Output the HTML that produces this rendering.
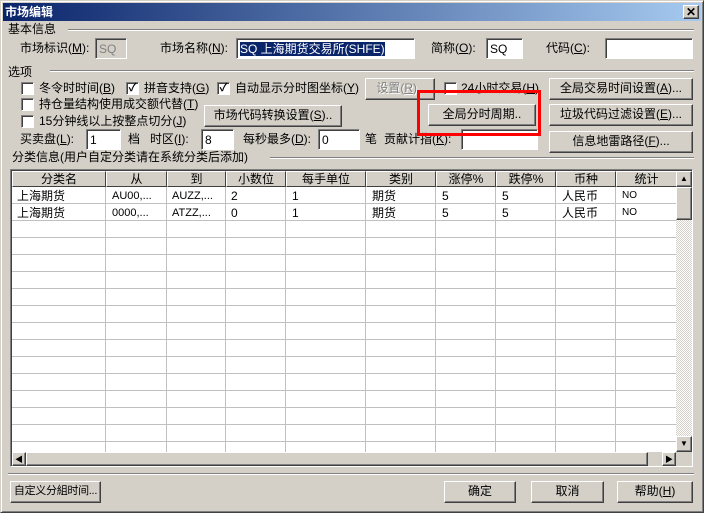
<!DOCTYPE html><html><head><meta charset="utf-8"><style>
*{box-sizing:border-box;margin:0;padding:0}
body{width:704px;height:513px;background:#d4d0c8;font:12px "Liberation Sans","WenQuanYi Zen Hei","Noto Sans CJK SC",sans-serif;color:#000;position:relative;overflow:hidden}
.a{position:absolute;white-space:nowrap;line-height:14px}
.win{position:absolute;left:0;top:0;width:704px;height:513px;border:1px solid;border-color:#d4d0c8 #404040 #404040 #d4d0c8;box-shadow:inset 1px 1px #fff,inset -1px -1px #808080}
.title{position:absolute;left:3px;top:3px;width:698px;height:18px;background:linear-gradient(90deg,#0a246a,#a6caf0);color:#fff;font-weight:bold;font-size:12px;line-height:18px;padding-left:2px}
.edit{position:absolute;background:#fff;border:1px solid;border-color:#808080 #fff #fff #808080;box-shadow:inset 1px 1px #404040;height:21px;padding:3px 3px;line-height:14px;white-space:nowrap;overflow:hidden}
.btn{position:absolute;background:#d4d0c8;border:1px solid;border-color:#fff #404040 #404040 #fff;box-shadow:inset -1px -1px #808080;text-align:center;line-height:19px;height:22px;white-space:nowrap;overflow:hidden}
.cb{position:absolute;width:13px;height:13px;background:#fff;border:1px solid;border-color:#808080 #fff #fff #808080;box-shadow:inset 1px 1px #404040;font-size:11px;line-height:11px;text-align:center;font-weight:bold}
.hr{position:absolute;height:2px;border-top:1px solid #808080;border-bottom:1px solid #fff}
.grid{position:absolute;left:10px;top:169px;width:683px;height:298px;border:1px solid;border-color:#808080 #fff #fff #808080;box-shadow:inset 1px 1px #404040;background:#fff;overflow:hidden}
.rows{position:absolute;left:1px;top:17px;width:665px;height:265px;background:repeating-linear-gradient(180deg,#fff 0 16px,#c0c0c0 16px 17px)}
.vl{position:absolute;top:17px;width:1px;height:265px;background:#c0c0c0}
.hd{position:absolute;top:1px;height:16px;background:#d4d0c8;border:1px solid;border-color:#fff #404040 #404040 #fff;text-align:center;line-height:14px}
.c{position:absolute;line-height:14px;font-size:12px}
.sb{position:absolute;background:#d4d0c8;border:1px solid;border-color:#fff #404040 #404040 #fff;box-shadow:inset -1px -1px #808080;font-size:8px;text-align:center;line-height:13px}
</style></head><body>
<div class="win"></div>
<div class="title">市场编辑</div>
<div class="sb" style="left:683px;top:5px;width:16px;height:14px;font-size:12px;line-height:12px;font-weight:bold">✕</div>
<div class="a" style="left:8px;top:22px">基本信息</div><div class="hr" style="left:68px;top:29px;width:626px"></div>
<div class="a" style="left:20px;top:41px">市场标识(<u>M</u>):</div>
<div class="edit" style="left:95px;top:38px;width:32px;background:#d4d0c8;color:#808080">SQ</div>
<div class="a" style="left:160px;top:41px">市场名称(<u>N</u>):</div>
<div class="edit" style="left:236px;top:38px;width:179px"><span style="background:#0a246a;color:#fff">SQ 上海期货交易所(SHFE)</span></div>
<div class="a" style="left:431px;top:41px">简称(<u>O</u>):</div>
<div class="edit" style="left:486px;top:38px;width:37px">SQ</div>
<div class="a" style="left:546px;top:41px">代码(<u>C</u>):</div>
<div class="edit" style="left:605px;top:38px;width:88px"></div>
<div class="a" style="left:8px;top:65px">选项</div><div class="hr" style="left:50px;top:70px;width:644px"></div>
<div class="cb" style="left:21px;top:82px"></div><div class="a" style="left:39px;top:81px">冬令时时间(<u>B</u>)</div>
<div class="cb" style="left:126px;top:82px">✓</div><div class="a" style="left:144px;top:81px">拼音支持(<u>G</u>)</div>
<div class="cb" style="left:217px;top:82px">✓</div><div class="a" style="left:235px;top:81px">自动显示分时图坐标(<u>Y</u>)</div>
<div class="btn" style="left:365px;top:78px;width:70px;color:#808080;text-shadow:1px 1px #fff">设置(<u>R</u>)..</div>
<div class="cb" style="left:444px;top:82px"></div><div class="a" style="left:461px;top:81px">24小时交易(<u>H</u>)</div>
<div class="btn" style="left:549px;top:78px;width:144px">全局交易时间设置(<u>A</u>)...</div>
<div class="cb" style="left:21px;top:98px"></div><div class="a" style="left:39px;top:97px">持仓量结构使用成交额代替(<u>T</u>)</div>
<div class="cb" style="left:21px;top:115px"></div><div class="a" style="left:39px;top:114px">15分钟线以上按整点切分(<u>J</u>)</div>
<div class="btn" style="left:204px;top:105px;width:138px">市场代码转换设置(<u>S</u>)..</div>
<div class="btn" style="left:428px;top:104px;width:108px">全局分时周期..</div>
<div class="btn" style="left:549px;top:104px;width:144px">垃圾代码过滤设置(<u>E</u>)...</div>
<div class="a" style="left:20px;top:132px">买卖盘(<u>L</u>):</div>
<div class="edit" style="left:86px;top:129px;width:35px">1</div>
<div class="a" style="left:128px;top:132px">档</div>
<div class="a" style="left:150px;top:132px">时区(<u>I</u>):</div>
<div class="edit" style="left:201px;top:129px;width:33px">8</div>
<div class="a" style="left:243px;top:132px">每秒最多(<u>D</u>):</div>
<div class="edit" style="left:318px;top:129px;width:42px">0</div>
<div class="a" style="left:365px;top:132px">笔</div>
<div class="a" style="left:384px;top:132px">贡献计指(<u>K</u>):</div>
<div class="edit" style="left:461px;top:129px;width:77px"></div>
<div class="btn" style="left:549px;top:131px;width:144px">信息地雷路径(<u>F</u>)...</div>
<div style="position:absolute;left:417px;top:90px;width:124px;height:46px;border:3px solid #f00;z-index:5"></div>
<div class="a" style="left:12px;top:150px">分类信息(用户自定分类请在系统分类后添加)</div><div class="hr" style="left:270px;top:157px;width:424px"></div>
<div class="grid">
<div class="rows"></div>
<div class="vl" style="left:94px"></div><div class="vl" style="left:155px"></div><div class="vl" style="left:214px"></div><div class="vl" style="left:274px"></div><div class="vl" style="left:354px"></div><div class="vl" style="left:424px"></div><div class="vl" style="left:484px"></div><div class="vl" style="left:544px"></div><div class="vl" style="left:604px"></div>
<div class="hd" style="left:1px;width:94px">分类名</div><div class="hd" style="left:95px;width:61px">从</div><div class="hd" style="left:156px;width:59px">到</div><div class="hd" style="left:215px;width:60px">小数位</div><div class="hd" style="left:275px;width:80px">每手单位</div><div class="hd" style="left:355px;width:70px">类别</div><div class="hd" style="left:425px;width:60px">涨停%</div><div class="hd" style="left:485px;width:60px">跌停%</div><div class="hd" style="left:545px;width:60px">币种</div><div class="hd" style="left:605px;width:61px">统计</div>
<div class="c" style="left:6px;top:19px">上海期货</div><div class="c" style="left:101px;top:19px;font-size:11px">AU00,...</div><div class="c" style="left:161px;top:19px;font-size:11px">AUZZ,...</div><div class="c" style="left:220px;top:19px">2</div><div class="c" style="left:281px;top:19px">1</div><div class="c" style="left:361px;top:19px">期货</div><div class="c" style="left:431px;top:19px">5</div><div class="c" style="left:491px;top:19px">5</div><div class="c" style="left:551px;top:19px">人民币</div><div class="c" style="left:611px;top:19px;font-size:10px">NO</div>
<div class="c" style="left:6px;top:36px">上海期货</div><div class="c" style="left:101px;top:36px;font-size:11px">0000,...</div><div class="c" style="left:161px;top:36px;font-size:11px">ATZZ,...</div><div class="c" style="left:220px;top:36px">0</div><div class="c" style="left:281px;top:36px">1</div><div class="c" style="left:361px;top:36px">期货</div><div class="c" style="left:431px;top:36px">5</div><div class="c" style="left:491px;top:36px">5</div><div class="c" style="left:551px;top:36px">人民币</div><div class="c" style="left:611px;top:36px;font-size:10px">NO</div>
<div style="position:absolute;left:665px;top:1px;width:16px;height:281px;background:repeating-conic-gradient(#d4d0c8 0 25%,#fff 0 50%) 0 0/2px 2px"></div>
<div class="sb" style="left:665px;top:1px;width:16px;height:16px">▲</div>
<div class="sb" style="left:665px;top:17px;width:16px;height:33px"></div>
<div class="sb" style="left:665px;top:266px;width:16px;height:16px">▼</div>
<div style="position:absolute;left:1px;top:282px;width:680px;height:14px;background:#d4d0c8"></div>
<div class="sb" style="left:1px;top:282px;width:14px;height:14px">◀</div>
<div class="sb" style="left:15px;top:282px;width:622px;height:14px"></div>
<div class="sb" style="left:651px;top:282px;width:14px;height:14px">▶</div>
</div>
<div class="hr" style="left:8px;top:473px;width:686px"></div>
<div class="btn" style="left:10px;top:481px;width:91px;font-size:11px;letter-spacing:-0.3px">自定义分組时间...</div>
<div class="btn" style="left:444px;top:481px;width:72px">确定</div>
<div class="btn" style="left:531px;top:481px;width:73px">取消</div>
<div class="btn" style="left:617px;top:481px;width:76px">帮助(<u>H</u>)</div>
</body></html>
